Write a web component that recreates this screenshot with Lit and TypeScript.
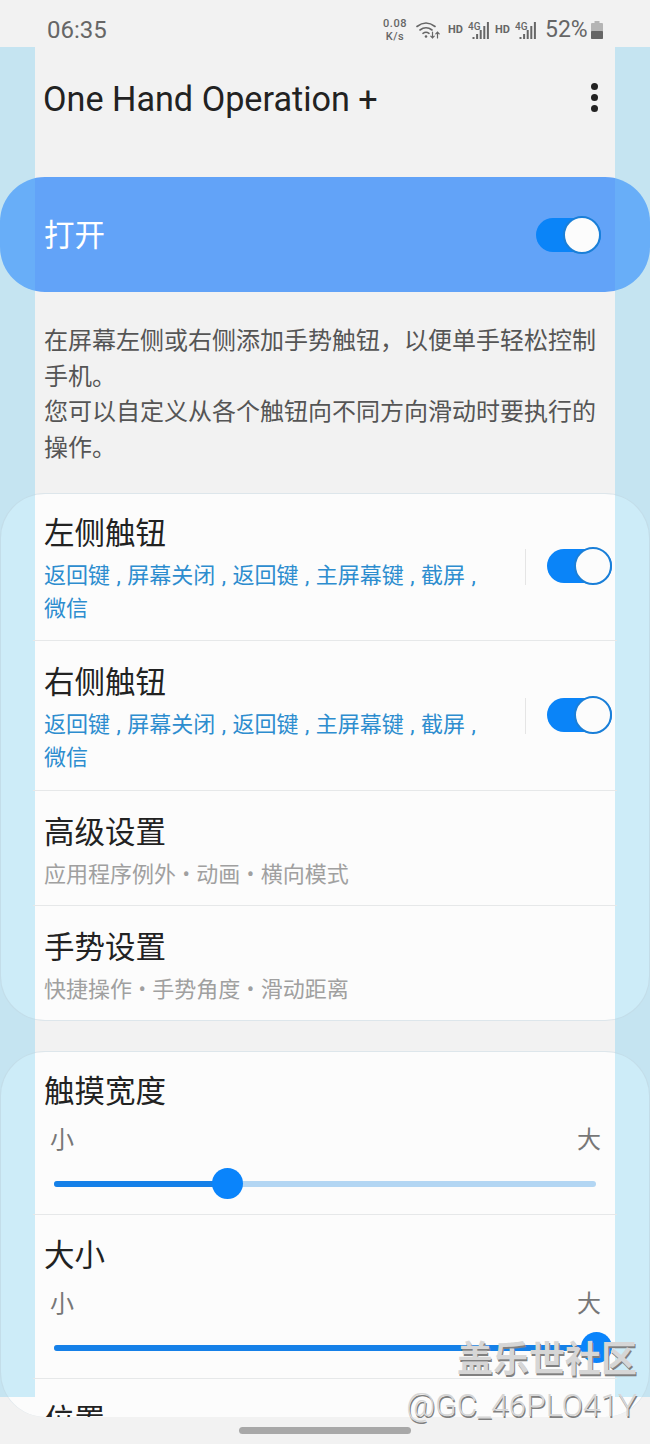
import {html, css, svg, LitElement} from 'lit';
import {customElement} from 'lit/decorators.js';

const BUTTON_SUB = '返回键 , 屏幕关闭 , 返回键 , 主屏幕键 , 截屏 , 微信';

@customElement('app-root')
export class AppRoot extends LitElement {
  static styles = css`
    :host {
      display: block;
      font-family: Roboto, "Noto Sans CJK SC", sans-serif;
    }

    .screen {
      position: relative;
      display: flex;
      flex-direction: column;
      width: 650px;
      height: 1444px;
      overflow: hidden;
      background: #f2f2f2;
    }

    /* status bar */
    .status {
      flex: none;
      display: flex;
      align-items: center;
      box-sizing: border-box;
      height: 47px;
      padding: 14px 47px 0;
      color: #666;
    }

    .time {
      font-size: 24px;
      line-height: 33px;
    }

    .tray {
      display: flex;
      align-items: center;
      margin-left: auto;
      margin-top: -1px;
    }

    .speed {
      width: 24px;
      font-size: 11px;
      font-weight: 500;
      letter-spacing: 0.5px;
      line-height: 13px;
      text-align: center;
    }

    .wifi {
      margin-left: 9px;
    }

    .hd {
      width: 16px;
      margin-left: 8px;
      font-size: 11px;
      font-weight: 700;
      line-height: 12px;
    }

    .hd + .signal {
      margin-left: 4px;
    }

    .signal + .hd {
      margin-left: 6px;
    }

    .pct {
      width: 42px;
      margin-left: 9px;
      font-size: 23px;
      line-height: 30px;
    }

    .battery {
      margin-left: 4px;
    }

    /* scrolling body with the pale side strips */
    .body {
      flex: none;
      display: flex;
      flex-direction: column;
      height: 1370px;
      background: linear-gradient(to right, #c5e4f1 35px, #f2f2f2 35px, #f2f2f2 615px, #c5e4f1 615px) 0 0 / 100% 1350px no-repeat;
    }

    .appbar {
      flex: none;
      display: flex;
      align-items: center;
      justify-content: space-between;
      height: 104px;
      margin: 0 35px 26px;
      padding: 0 17px 0 8px;
      color: #222;
    }

    .app-title {
      font-size: 34.2px;
      line-height: 44px;
    }

    .dots {
      display: flex;
      flex-direction: column;
      gap: 4px;
      margin-top: -4px;
    }

    .dots span {
      width: 7px;
      height: 7px;
      border-radius: 50%;
      background: #222;
    }

    .master {
      flex: none;
      display: flex;
      align-items: center;
      justify-content: space-between;
      box-sizing: border-box;
      height: 115px;
      padding: 0 49px 0 44px;
      border-radius: 45px;
      background: linear-gradient(to right, #68aef8 35px, #62a3f8 35px, #62a3f8 615px, #68aef8 615px);
      color: #fff;
      font-size: 30.5px;
    }

    .master span {
      margin-top: -4px;
    }

    .desc {
      flex: none;
      margin: 0;
      padding: 32px 52px 27px 44px;
      color: #555;
      font-size: 24px;
      line-height: 35.5px;
    }

    .card {
      flex: none;
      box-sizing: border-box;
      overflow: hidden;
      border: 1px solid rgba(185, 205, 215, 0.45);
      border-radius: 45px;
      background: linear-gradient(to right, #cdecf8 35px, #fcfcfc 35px, #fcfcfc 615px, #cdecf8 615px) 0 0 / 100% 100% no-repeat border-box, #fcfcfc;
    }

    .card.last {
      flex: 1;
      margin-top: 30px;
      border-bottom: none;
      background: linear-gradient(to right, #cdecf8 35px, #fcfcfc 35px, #fcfcfc 615px, #cdecf8 615px) 0 0 / 100% 346px no-repeat border-box, #fcfcfc;
    }

    .row {
      display: flex;
      margin: 0 32px;
      padding: 22px 5px 16px 11px;
      border-bottom: 1px solid #e6e8e9;
    }

    .row:first-child {
      padding-top: 20px;
      padding-bottom: 15px;
    }

    .row.link {
      padding-bottom: 14px;
    }

    .row:last-child {
      border-bottom: none;
    }

    .row-text {
      flex: 1;
      min-width: 0;
      padding-right: 30px;
    }

    .title {
      color: #222;
      font-size: 30.5px;
      line-height: 40px;
    }

    .sub {
      margin-top: 5px;
      font-size: 22px;
      line-height: 33px;
      word-spacing: 1px;
      color: #a0a0a0;
    }

    .sub.blue {
      color: #2d8dcf;
    }

    .sep {
      flex: none;
      width: 1px;
      height: 36px;
      margin: 35px 21px 0 0;
      background: #e5e5e5;
    }

    .switch {
      flex: none;
      display: flex;
      align-items: center;
      justify-content: flex-end;
      width: 65px;
      height: 34px;
      border-radius: 17px;
      background: #0a84f8;
    }

    .row .switch {
      margin-top: 35px;
    }

    .knob {
      box-sizing: border-box;
      width: 38px;
      height: 38px;
      margin: -2px 0;
      border: 2px solid #1a7fd8;
      border-radius: 50%;
      background: #fcfcfc;
    }

    .slider-row {
      display: block;
      padding-top: 21px;
      padding-bottom: 15px;
    }

    .ends {
      display: flex;
      justify-content: space-between;
      margin-top: 11px;
      padding: 0 11px 0 6px;
      color: #777;
      font-size: 24px;
      line-height: 34px;
    }

    .track {
      position: relative;
      height: 6px;
      margin: 24px 16px 12px 10px;
      border-radius: 3px;
      background: #b3d6f3;
    }

    .fill {
      height: 100%;
      border-radius: 3px;
      background: #1580e8;
    }

    .thumb {
      position: absolute;
      top: -13px;
      width: 31px;
      height: 31px;
      margin-left: -15.5px;
      border-radius: 50%;
      background: #0a84fb;
    }

    /* gesture bar */
    .nav {
      flex: none;
      display: flex;
      justify-content: center;
      height: 27px;
      padding-top: 10px;
      box-sizing: border-box;
      background: #f2f2f2;
    }

    .handle {
      width: 172px;
      height: 7px;
      border-radius: 4px;
      background: #a8a8a8;
    }

    /* forum watermark burnt into the screenshot */
    .mark {
      position: absolute;
      right: 13px;
      bottom: 18px;
      display: flex;
      flex-direction: column;
      align-items: flex-end;
      color: #d6d6d6;
      text-shadow: 1px 2px 0 #808080;
      pointer-events: none;
    }

    .mark-name {
      margin-bottom: 4px;
      font-size: 36px;
      font-weight: 700;
      line-height: 44px;
    }

    .mark-user {
      font-size: 31.7px;
      font-weight: 300;
      line-height: 40px;
    }
  `;

  private _signal() {
    const bars = [2, 5, 9, 13, 17];
    return html`<svg class="signal" width="21" height="18" viewBox="0 0 21 18">
      <text x="0" y="8.5" font-size="10" font-weight="500" font-family="Roboto" fill="#666">4G</text>
      ${bars.map((h, i) => svg`<rect x=${4.5 + i * 3.6} y=${18 - h} width="2" height=${h} fill="#666"></rect>`)}
    </svg>`;
  }

  private _switch() {
    return html`<div class="switch"><div class="knob"></div></div>`;
  }

  private _toggleRow(title: string) {
    return html`<div class="row">
      <div class="row-text">
        <div class="title">${title}</div>
        <div class="sub blue">${BUTTON_SUB}</div>
      </div>
      <div class="sep"></div>
      ${this._switch()}
    </div>`;
  }

  private _linkRow(title: string, sub: string) {
    return html`<div class="row link">
      <div class="row-text">
        <div class="title">${title}</div>
        <div class="sub">${sub}</div>
      </div>
    </div>`;
  }

  private _sliderRow(title: string, value: number) {
    return html`<div class="row slider-row">
      <div class="title">${title}</div>
      <div class="ends"><span>小</span><span>大</span></div>
      <div class="track">
        <div class="fill" style="width: ${value}%"></div>
        <div class="thumb" style="left: ${value}%"></div>
      </div>
    </div>`;
  }

  render() {
    return html`
      <div class="screen">
        <div class="status">
          <span class="time">06:35</span>
          <div class="tray">
            <div class="speed">0.08<br />K/s</div>
            <svg class="wifi" width="24" height="18" viewBox="0 0 24 18" fill="none" stroke="#666" stroke-width="1.6" stroke-linecap="round">
              <path d="M1 5.5Q10 -1.5 19 5.5"></path>
              <path d="M4 9Q10 4.5 16 9"></path>
              <path d="M7 12.3Q10 10.2 13 12.3"></path>
              <circle cx="10" cy="15.5" r="1.3" fill="#666" stroke="none"></circle>
              <path d="M16.5 11V17M14.8 15.2L16.5 17L18.2 15.2M21.5 17V11M19.8 12.8L21.5 11L23.2 12.8" stroke-width="1.2"></path>
            </svg>
            <span class="hd">HD</span>
            ${this._signal()}
            <span class="hd">HD</span>
            ${this._signal()}
            <span class="pct">52%</span>
            <svg class="battery" width="12" height="18" viewBox="0 0 12 18">
              <rect x="3.5" y="0" width="5" height="2" fill="#b5b5b5"></rect>
              <rect x="0" y="2" width="12" height="16" rx="1" fill="#b5b5b5"></rect>
              <rect x="0" y="10" width="12" height="8" rx="1" fill="#666"></rect>
            </svg>
          </div>
        </div>

        <div class="body">
          <div class="appbar">
            <span class="app-title">One Hand Operation +</span>
            <div class="dots"><span></span><span></span><span></span></div>
          </div>

          <div class="master">
            <span>打开</span>
            ${this._switch()}
          </div>

          <p class="desc">在屏幕左侧或右侧添加手势触钮，以便单手轻松控制手机。<br />您可以自定义从各个触钮向不同方向滑动时要执行的操作。</p>

          <div class="card">
            ${this._toggleRow('左侧触钮')}
            ${this._toggleRow('右侧触钮')}
            ${this._linkRow('高级设置', '应用程序例外 • 动画 • 横向模式')}
            ${this._linkRow('手势设置', '快捷操作 • 手势角度 • 滑动距离')}
          </div>

          <div class="card last">
            ${this._sliderRow('触摸宽度', 32)}
            ${this._sliderRow('大小', 100)}
            <div class="row link"><div class="title">位置</div></div>
          </div>
        </div>

        <div class="nav"><div class="handle"></div></div>

        <div class="mark">
          <span class="mark-name">盖乐世社区</span>
          <span class="mark-user">@GC_46PLO41Y</span>
        </div>
      </div>
    `;
  }
}
